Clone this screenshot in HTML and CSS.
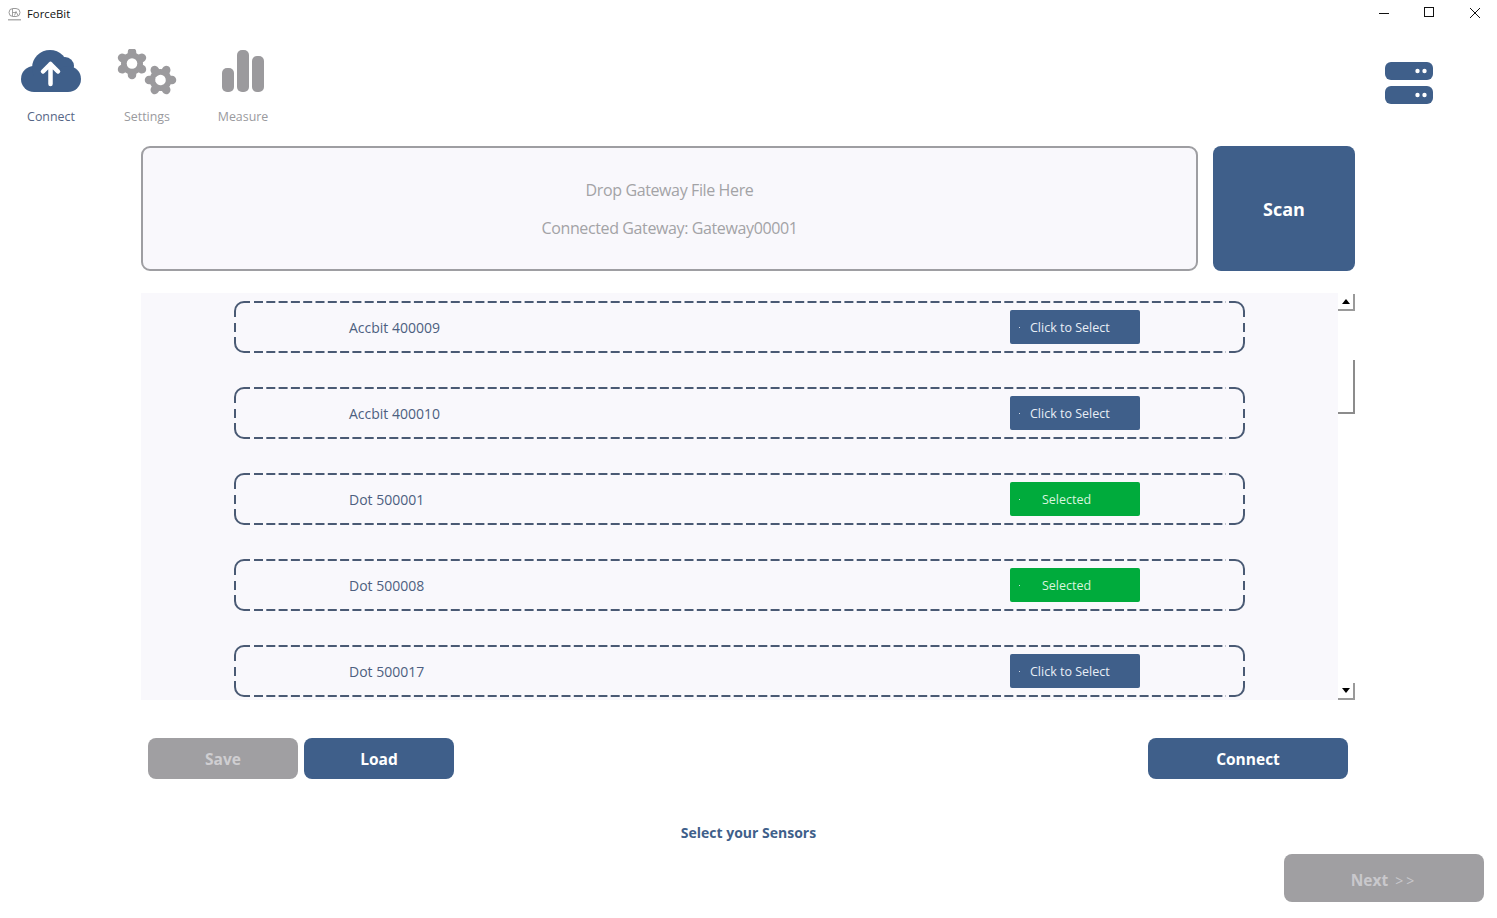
FILE: index.html
```html
<!DOCTYPE html>
<html lang="en">
<head>
<meta charset="utf-8">
<title>ForceBit</title>
<link rel="stylesheet" href="styles.css">
</head>
<body>
<svg class="defs" width="0" height="0" aria-hidden="true">
  <defs>
    <g id="gear">
      <circle r="11" fill="#9b9a9d"/>
      <g stroke="#9b9a9d" stroke-width="8.5" stroke-linecap="round">
        <line x1="0" y1="-11.500" x2="0" y2="11.500"/>
        <line x1="0" y1="-11.500" x2="0" y2="11.500" transform="rotate(60)"/>
        <line x1="0" y1="-11.500" x2="0" y2="11.500" transform="rotate(120)"/>
      </g>
      <circle r="5.300" fill="#fff"/>
    </g>
    <g id="dash" fill="none" stroke="#4a5a74" stroke-width="2">
      <path d="M1 16V10A9 9 0 0 1 10 1H16M1 36V42A9 9 0 0 0 10 51H16M1010 16V10A9 9 0 0 0 1001 1H995M1010 36V42A9 9 0 0 1 1001 51H995M1 22V31M1010 22V31"/>
      <path d="M20 1H992M20 51H992" stroke-dasharray="9 3.300"/>
    </g>
  </defs>
</svg>
<div class="app">
  <header class="titlebar">
    <div class="title">
      <svg class="appicon" width="14" height="14" viewBox="0 0 14 14">
        <rect x="2" y="0.500" width="11" height="8" rx="4" fill="none" stroke="#9a9a9a"/>
        <path d="M5.500 1v7M7.500 7.500l1.500-4 2 4M5.500 4.500H9" fill="none" stroke="#8a8a8a" stroke-width="0.800"/>
        <rect x="1" y="11" width="13" height="1.500" fill="#b0b0b0"/>
      </svg>
      <span>ForceBit</span>
    </div>
    <div class="winctl">
      <svg width="12" height="12" viewBox="0 0 12 12"><path d="M0 6.500h10" stroke="#111" fill="none"/></svg>
      <svg width="12" height="12" viewBox="0 0 12 12"><rect x="0.500" y="0.500" width="9" height="9" stroke="#111" fill="none"/></svg>
      <svg width="12" height="12" viewBox="0 0 12 12"><path d="M1 1l10 10M11 1L1 11" stroke="#111" fill="none"/></svg>
    </div>
  </header>

  <nav class="toolbar">
    <div class="tools">
      <div class="tool tool-connect">
        <svg class="tool-icon" width="62" height="60" viewBox="0 0 62 60">
          <g fill="#3f5f8a">
            <circle cx="14" cy="30" r="13"/>
            <circle cx="30" cy="19" r="18"/>
            <circle cx="45" cy="17" r="9"/>
            <circle cx="48" cy="30" r="13"/>
            <rect x="14" y="25" width="34" height="18"/>
          </g>
          <path d="M30.500 35V15M23 22.500L30.500 15l7.500 7.500" fill="none" stroke="#fff" stroke-width="4.500" stroke-linecap="round" stroke-linejoin="round"/>
        </svg>
        <span>Connect</span>
      </div>
      <div class="tool tool-settings">
        <svg class="tool-icon" width="62" height="60" viewBox="0 0 62 60">
          <use href="#gear" transform="translate(16 14.500)"/>
          <use href="#gear" transform="translate(44.500 31) rotate(30)"/>
        </svg>
        <span>Settings</span>
      </div>
      <div class="tool tool-measure">
        <svg class="tool-icon" width="44" height="60" viewBox="0 0 44 60">
          <g fill="#9b9a9d">
            <rect x="1" y="19" width="12" height="24" rx="5"/>
            <rect x="16" y="1" width="12" height="42" rx="5"/>
            <rect x="31" y="7" width="12" height="36" rx="5"/>
          </g>
        </svg>
        <span>Measure</span>
      </div>
    </div>
    <svg class="server" width="48" height="42" viewBox="0 0 48 42">
      <rect width="48" height="18" rx="6" fill="#3f5f8a"/>
      <rect y="24" width="48" height="18" rx="6" fill="#3f5f8a"/>
      <g fill="#fff">
        <circle cx="32.500" cy="9" r="2.200"/><circle cx="39.500" cy="9" r="2.200"/>
        <circle cx="32.500" cy="33" r="2.200"/><circle cx="39.500" cy="33" r="2.200"/>
      </g>
    </svg>
  </nav>

  <section class="gateway">
    <div class="drop">
      <p>Drop Gateway File Here</p>
      <p>Connected Gateway: Gateway00001</p>
    </div>
    <button class="scan">Scan</button>
  </section>

  <section class="list">
    <div class="rows">
      <div class="row"><svg class="dash" width="1011" height="52"><use href="#dash"/></svg><span class="name">Accbit 400009</span><span class="pick">Click to Select</span></div>
      <div class="row"><svg class="dash" width="1011" height="52"><use href="#dash"/></svg><span class="name">Accbit 400010</span><span class="pick">Click to Select</span></div>
      <div class="row"><svg class="dash" width="1011" height="52"><use href="#dash"/></svg><span class="name">Dot 500001</span><span class="pick on">Selected</span></div>
      <div class="row"><svg class="dash" width="1011" height="52"><use href="#dash"/></svg><span class="name">Dot 500008</span><span class="pick on">Selected</span></div>
      <div class="row"><svg class="dash" width="1011" height="52"><use href="#dash"/></svg><span class="name">Dot 500017</span><span class="pick">Click to Select</span></div>
    </div>
    <div class="scrollbar">
      <div class="sb-btn"><svg width="8" height="5" viewBox="0 0 8 5"><path d="M4 0l4 5H0z" fill="#000"/></svg></div>
      <div class="sb-thumb"></div>
      <div class="sb-btn"><svg width="8" height="5" viewBox="0 0 8 5"><path d="M0 0h8L4 5z" fill="#000"/></svg></div>
    </div>
  </section>

  <section class="actions">
    <div class="actions-left">
      <button class="btn muted">Save</button>
      <button class="btn">Load</button>
    </div>
    <button class="btn wide">Connect</button>
  </section>

  <p class="hint">Select your Sensors</p>

  <footer class="foot">
    <button class="next">Next <small>&gt;&gt;</small></button>
  </footer>
</div>
</body>
</html>
```
FILE: styles.css
```css
* { box-sizing: border-box; }
html, body { margin: 0; padding: 0; background: #fff; }
body { width: 1497px; height: 918px; overflow: hidden; font-family: "Open Sans", "Noto Sans", sans-serif; }
.defs { position: absolute; }
.app { display: flex; flex-direction: column; height: 918px; }
button { font-family: inherit; border: 0; cursor: pointer; padding: 0; }

.titlebar { height: 28px; display: flex; justify-content: space-between; align-items: center; padding: 0 16px 2px 7px; }
.title { display: flex; align-items: center; gap: 6px; font-size: 11.3px; color: #111; }
.appicon { margin-top: 3px; }
.winctl { display: flex; gap: 33px; }

.toolbar { height: 118px; display: flex; justify-content: space-between; padding: 0 64px 0 20px; }
.tools { display: flex; }
.tool { display: flex; flex-direction: column; align-items: center; font-size: 12.4px; color: #9a9a9e; }
.tool-icon { display: block; margin-top: 21px; }
.tool span { margin-top: -1px; line-height: 17px; }
.tool-connect { width: 62px; color: #566686; }
.tool-settings { width: 62px; margin-left: 34px; }
.tool-measure { width: 44px; margin-left: 43px; }
.server { margin-top: 34px; }

.gateway { display: flex; gap: 15px; height: 125px; margin-left: 141px; width: 1214px; }
.drop { flex: 1; background: #f9f8fc; border: 2px solid #9e9ea2; border-radius: 9px; display: flex; flex-direction: column; align-items: center; justify-content: center; gap: 16px; color: #a3a3a6; font-size: 16px; letter-spacing: -0.38px; }
.drop p { margin: 0; line-height: 22px; }
.scan { width: 142px; background: #3f5f8a; color: #fff; font-size: 18px; font-weight: 700; border-radius: 8px; }

.list { display: flex; margin: 22px 0 0 141px; width: 1214px; height: 407px; }
.rows { flex: 1; background: #f9f8fc; padding: 8px 0 0 93px; display: flex; flex-direction: column; gap: 34px; overflow: hidden; }
.row { position: relative; flex: none; width: 1011px; height: 52px; display: flex; align-items: center; padding-left: 115px; font-size: 14px; color: #4d5f80; }
.dash { position: absolute; left: 0; top: 0; }
.name { width: 661px; flex: none; }
.pick { position: relative; width: 130px; height: 34px; margin-top: -1px; flex: none; display: flex; align-items: center; padding: 2px 0 0 20px; background: #3f5f8a; color: #e8eef6; font-size: 12.5px; border-radius: 2px; }
.pick::before { content: ""; position: absolute; left: 9px; top: 17px; width: 1px; height: 1px; background: #cfd9e6; }
.pick.on { background: #00ab3c; padding-left: 32px; color: #d8f5df; }

.scrollbar { width: 17px; padding-top: 1px; display: flex; flex-direction: column; justify-content: space-between; position: relative; }
.sb-btn { height: 17px; display: flex; align-items: center; justify-content: center; border-right: 2px solid #9a9a9a; border-bottom: 2px solid #9a9a9a; }
.sb-thumb { position: absolute; left: 0; top: 67px; width: 17px; height: 54px; border-right: 2px solid #8c8c8c; border-bottom: 2px solid #8c8c8c; }

.actions { display: flex; justify-content: space-between; margin: 38px 0 0 148px; width: 1200px; }
.actions-left { display: flex; gap: 6px; }
.btn { width: 150px; height: 41px; background: #3f5f8a; color: #fff; font-size: 15.5px; font-weight: 700; border-radius: 8px; }
.btn.muted { background: #a09fa2; color: #cfced1; }
.btn.wide { width: 200px; }

.hint { margin: 44px 0 0; height: 20px; width: 1497px; text-align: center; font-size: 14px; line-height: 20px; font-weight: 700; color: #3f5f8a; }

.foot { display: flex; justify-content: flex-end; padding: 11px 13px 0 0; }
.next { width: 200px; height: 48px; padding-top: 4px; background: #a09fa2; color: #c9c8cc; font-size: 15.5px; font-weight: 700; border-radius: 8px; }
.next small { font-size: 14px; font-weight: 400; letter-spacing: 3px; margin-left: 3px; }
```
